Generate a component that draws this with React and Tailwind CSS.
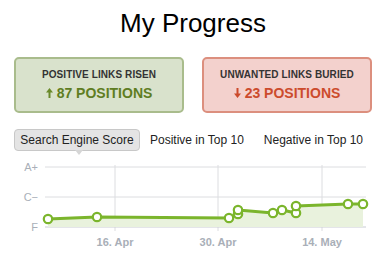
import React from "react";

const pts = [
  [48, 64],
  [97, 62],
  [229, 63],
  [238, 59],
  [238, 55],
  [273, 58],
  [282, 55],
  [296, 58],
  [296, 51],
  [348, 49],
  [363, 49],
];

const line = pts.map(([x, y], i) => `${i ? "L" : "M"}${x} ${y}`).join(" ");
const area = `${line} L363 72 L48 72 Z`;

const Arrow = ({ down, color }) => (
  <svg width="7" height="10" viewBox="0 0 7 10" className="mr-[4px]" style={{ transform: down ? "rotate(180deg)" : undefined }}>
    <path d="M3.5 0 L7 4.5 L4.5 4.5 L4.5 10 L2.5 10 L2.5 4.5 L0 4.5 Z" fill={color} />
  </svg>
);

const StatBox = ({ label, value, tone }) => {
  const green = tone === "green";
  return (
    <div
      className={`w-[170px] h-[56px] rounded-[5px] border-2 flex flex-col items-center justify-center ${
        green ? "bg-[#d9e2cc] border-[#a9bc8c]" : "bg-[#f3d1cd] border-[#dc8f7e]"
      }`}
    >
      <div className="text-[10px] font-bold text-[#333] leading-none tracking-[0.01em]">{label}</div>
      <div
        className={`mt-[6px] flex items-center text-[14px] font-bold leading-none ${
          green ? "text-[#5f7d22]" : "text-[#cc4b2c]"
        }`}
      >
        <Arrow down={!green} color={green ? "#6a8a2a" : "#cc4b2c"} />
        {value}
      </div>
    </div>
  );
};

export default function App() {
  return (
    <div className="w-[386px] h-[258px] bg-white overflow-hidden" style={{ fontFamily: '"Liberation Sans", Arial, sans-serif' }}>
      <h1 className="pt-[10px] text-[26px] leading-none text-center text-black">My Progress</h1>

      <div className="mt-[21px] px-[14px] flex gap-[18px]">
        <StatBox label="POSITIVE LINKS RISEN" value="87 POSITIONS" tone="green" />
        <StatBox label="UNWANTED LINKS BURIED" value="23 POSITIONS" tone="red" />
      </div>

      <div className="mt-[16px] px-[14px] flex items-center text-[12px] text-[#222]">
        <div className="relative h-[22px] w-[126px] rounded-[4px] border border-[#c8c8c8] bg-[#e4e4e4] flex items-center justify-center">
          Search Engine Score
          <span className="absolute left-[60px] -bottom-[5px] w-0 h-0 border-x-[4px] border-x-transparent border-t-[5px] border-t-[#d6d6d6]" />
        </div>
        <span className="ml-[10px]">Positive in Top 10</span>
        <span className="ml-[20px]">Negative in Top 10</span>
      </div>

      <svg width="386" height="103" className="block mt-[4px]">
        {[12, 42].map((y) => (
          <line key={y} x1="45" x2="366" y1={y} y2={y} stroke="#dcdde0" strokeWidth="1" />
        ))}
        {[115, 218, 322].map((x) => (
          <line key={x} x1={x} x2={x} y1="10" y2="76" stroke="#dcdde0" strokeWidth="1" />
        ))}
        <line x1="45" x2="366" y1="72" y2="72" stroke="#c9ccd4" strokeWidth="1" />
        <g fill="#a9afb8" fontSize="11" fontFamily='"Liberation Sans", Arial, sans-serif'>
          <text x="38" y="16" textAnchor="end">A+</text>
          <text x="38" y="46" textAnchor="end">C−</text>
          <text x="38" y="76" textAnchor="end">F</text>
          <text x="115" y="91" textAnchor="middle" fontWeight="bold">16. Apr</text>
          <text x="218" y="91" textAnchor="middle" fontWeight="bold">30. Apr</text>
          <text x="322" y="91" textAnchor="middle" fontWeight="bold">14. May</text>
        </g>
        <path d={area} fill="#e9f2dd" />
        <path d={line} fill="none" stroke="#7bb52c" strokeWidth="3" strokeLinejoin="round" />
        {pts.map(([x, y], i) => (
          <circle key={i} cx={x} cy={y} r="4.2" fill="#fff" stroke="#7bb52c" strokeWidth="2.2" />
        ))}
      </svg>
    </div>
  );
}
